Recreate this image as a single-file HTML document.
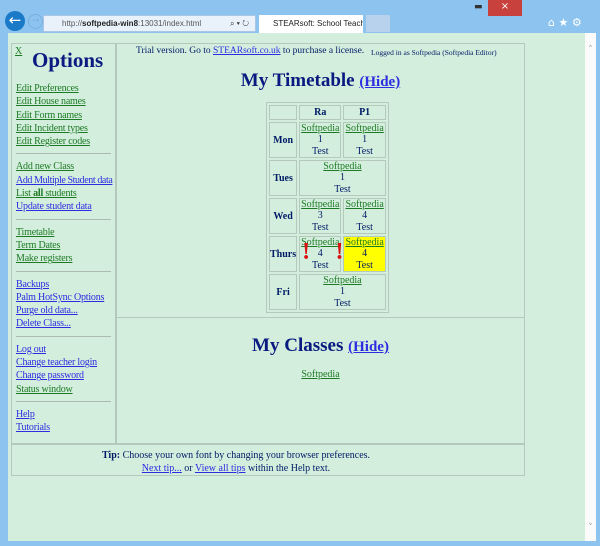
<!DOCTYPE html>
<html><head><style>
*{margin:0;padding:0;box-sizing:border-box}
body{width:600px;height:546px;background:#8cc4ef;position:relative;overflow:hidden;font-family:"Liberation Serif",serif;color:#001a66}
.a{position:absolute}
a{text-decoration:underline}
.g{color:#1d7a24}.b{color:#2c2ce0}
#page{left:8px;top:33px;width:577px;height:508px;background:#d3eedd}
#sb{left:585px;top:33px;width:11px;height:508px;background:#fbfbfb}
.box{border:1px solid #b4c8bb}
.nav div.l{font-size:10px;line-height:13.3px;height:13.3px;white-space:nowrap;letter-spacing:-0.2px}
.nav div.hr{height:1px;background:#aabcb0;margin:5px 4px 6px 0}
table{border-collapse:separate;border-spacing:2px;border:1px solid #b4c8bb;font-size:10px;text-align:center}
td{border:1px solid #b4c8bb;line-height:11.3px;padding:0 1px}
th{border:1px solid #b4c8bb;font-size:10px}
</style></head><body>
<div class="a" style="left:5px;top:11px;width:20px;height:20px;border-radius:50%;background:#1a7ac8;color:#fff;font-size:15px;text-align:center;line-height:19px;font-family:'DejaVu Sans'">←</div>
<div class="a" style="left:28px;top:14px;width:15px;height:15px;border-radius:50%;border:1px solid #7aaee0;color:#7aaee0;font-size:9px;text-align:center;line-height:13px;font-family:'DejaVu Sans'">→</div>
<div class="a" style="left:43px;top:15px;width:213px;height:17px;background:#e9f2fb;border:1px solid #a9c6e6;font:8px 'Liberation Sans',sans-serif;line-height:15px;padding-left:18px;color:#555">http://<b style="color:#222">softpedia-win8</b>:13031/index.html<span style="position:absolute;right:6px;color:#333">⌕ ▾ ↻</span></div>
<div class="a" style="left:259px;top:15px;width:104px;height:18px;background:#fff;font:8px 'Liberation Sans',sans-serif;line-height:17px;padding-left:14px;color:#222;white-space:nowrap;overflow:hidden">STEARsoft: School Teachers... ×</div>
<div class="a" style="left:366px;top:15px;width:24px;height:17px;background:#b8d2ee"></div>
<div class="a" style="left:488px;top:0;width:34px;height:16px;background:#c9413c;color:#fff;text-align:center;font:10px 'DejaVu Sans';line-height:14px">×</div>
<div class="a" style="left:474px;top:2px;color:#333;font:9px 'DejaVu Sans'">▬</div>
<div class="a" style="left:548px;top:16px;color:#fff;font:11px 'DejaVu Sans'">⌂ ★ ⚙</div>
<div class="a" id="page"></div>
<div class="a" id="sb"><div style="text-align:center;color:#999;font-size:9px;font-family:'DejaVu Sans';margin-top:12px">˄</div><div style="position:absolute;bottom:8px;width:100%;text-align:center;color:#999;font-size:9px;font-family:'DejaVu Sans'">˅</div></div>

<div class="a box" style="left:11px;top:43px;width:105px;height:401px;padding:3px 0 0 4px">
<div class="g" style="font-size:10px;position:absolute;left:3px;top:2px;text-decoration:underline">X</div>
<div style="font-size:21px;font-weight:bold;color:#0a1a80;margin-left:16px;line-height:26px">Options</div>
<div class="nav" style="margin-top:9px">
<div class="l g"><a>Edit Preferences</a></div><div class="l g"><a>Edit House names</a></div><div class="l g"><a>Edit Form names</a></div><div class="l g"><a>Edit Incident types</a></div><div class="l g"><a>Edit Register codes</a></div>
<div class="hr"></div>
<div class="l g"><a>Add new Class</a></div><div class="l b"><a style="letter-spacing:-0.4px">Add Multiple Student data</a></div><div class="l g"><a>List <b>all</b> students</a></div><div class="l b"><a>Update student data</a></div>
<div class="hr"></div>
<div class="l g"><a>Timetable</a></div><div class="l g"><a>Term Dates</a></div><div class="l g"><a>Make registers</a></div>
<div class="hr"></div>
<div class="l b"><a>Backups</a></div><div class="l b"><a>Palm HotSync Options</a></div><div class="l b"><a>Purge old data...</a></div><div class="l b"><a>Delete Class...</a></div>
<div class="hr"></div>
<div class="l b"><a>Log out</a></div><div class="l b"><a>Change teacher login</a></div><div class="l b"><a>Change password</a></div><div class="l g"><a>Status window</a></div>
<div class="hr"></div>
<div class="l b"><a>Help</a></div><div class="l b"><a>Tutorials</a></div>
</div></div>

<div class="a box" style="left:116px;top:43px;width:409px;height:275px"></div>
<div class="a box" style="left:116px;top:317px;width:409px;height:127px"></div>
<div class="a" style="left:136px;top:46px;font-size:9.5px;white-space:nowrap">Trial version. Go to <a class="b">STEARsoft.co.uk</a> to purchase a license.</div>
<div class="a" style="left:371px;top:48px;font-size:7.5px;white-space:nowrap">Logged in as Softpedia (Softpedia Editor)</div>
<div class="a" style="left:116px;top:70px;width:409px;text-align:center;font-size:19px;font-weight:bold;color:#0a1a80">My Timetable <a class="b" style="font-size:15px">(Hide)</a></div>
<table class="a" style="left:266px;top:102px;width:110px">
<tr style="height:15px"><th></th><th>Ra</th><th>P1</th></tr>
<tr style="height:36px"><th>Mon</th><td><a class="g">Softpedia</a><br>1<br>Test</td><td><a class="g">Softpedia</a><br>1<br>Test</td></tr>
<tr style="height:36px"><th>Tues</th><td colspan="2"><a class="g">Softpedia</a><br>1<br>Test</td></tr>
<tr style="height:36px"><th>Wed</th><td><a class="g">Softpedia</a><br>3<br>Test</td><td><a class="g">Softpedia</a><br>4<br>Test</td></tr>
<tr style="height:36px"><th>Thurs</th><td style="position:relative"><a class="g">Softpedia</a><br>4<br>Test<span style="position:absolute;left:2px;top:2px;color:#d81010;font-size:24px;font-weight:bold;line-height:26px">!</span><span style="position:absolute;right:-3px;top:2px;color:#d81010;font-size:24px;font-weight:bold;line-height:26px">!</span></td><td style="background:#ffff00"><a class="g">Softpedia</a><br>4<br>Test</td></tr>
<tr style="height:36px"><th>Fri</th><td colspan="2"><a class="g">Softpedia</a><br>1<br>Test</td></tr>
</table>
<div class="a" style="left:116px;top:335px;width:409px;text-align:center;font-size:19px;font-weight:bold;color:#0a1a80">My Classes <a class="b" style="font-size:15px">(Hide)</a></div>
<div class="a g" style="left:116px;top:369px;width:409px;text-align:center;font-size:10px"><a>Softpedia</a></div>

<div class="a box" style="left:11px;top:444px;width:514px;height:32px;text-align:center;font-size:10px;line-height:13px;padding-top:4px">
<div style="margin-left:-64px"><b>Tip:</b> Choose your own font by changing your browser preferences.</div>
<div style="margin-left:-64px"><a class="b">Next tip...</a> or <a class="b">View all tips</a> within the Help text.</div>
</div>
</body></html>
